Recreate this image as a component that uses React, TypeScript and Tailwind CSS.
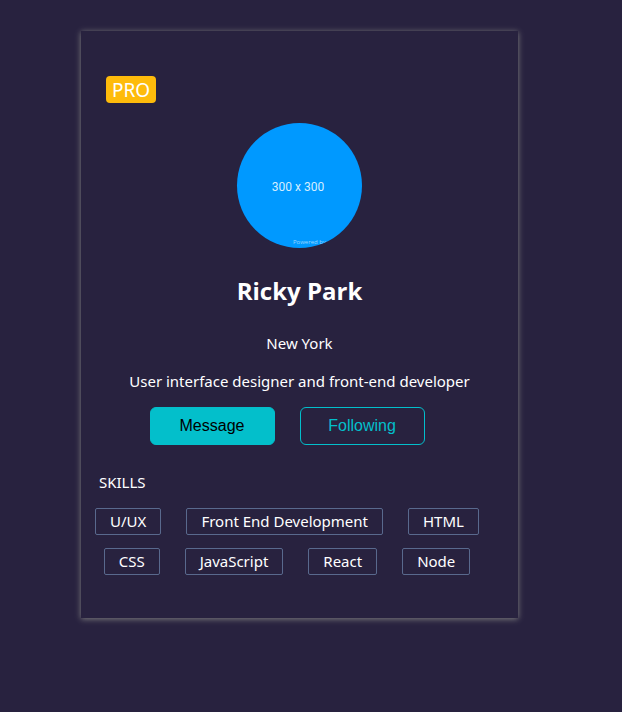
import React from "react";

const skillRows = [
  ["U/UX", "Front End Development", "HTML"],
  ["CSS", "JavaScript", "React", "Node"],
];

function Avatar() {
  return (
    <svg
      role="img"
      aria-label="Ricky Park"
      viewBox="0 0 125 125"
      className="mx-auto mt-5 block size-[125px] rounded-full bg-[#0099ff]"
    >
      <text
        x="61"
        y="68"
        textAnchor="middle"
        fontSize="12"
        fill="#d5eeff"
        className="font-['Roboto',sans-serif]"
      >
        300 x 300
      </text>
      <text x="56" y="121" fontSize="6" fill="#99d6ff" className="font-['Open_Sans',sans-serif]">
        Powered by
      </text>
    </svg>
  );
}

function SkillRow({ skills }: { skills: string[] }) {
  return (
    <ul className="flex justify-center">
      {skills.map((skill) => (
        <li
          key={skill}
          className="mr-[25px] h-[27px] rounded-xs border border-[#59698d] px-[14px] leading-[25px] whitespace-nowrap"
        >
          {skill}
        </li>
      ))}
    </ul>
  );
}

export default function App() {
  return (
    <div className="min-h-screen bg-[#28223f] pt-[31px] pr-[104px] pb-10 pl-[81px] font-['Noto_Sans','Segoe_UI',sans-serif] text-[15px] leading-6 text-white">
      <main className="pt-[45px] pb-[43px] shadow-[0_1px_6px_0_#808080]">
        <span className="ml-[25px] block h-[27px] w-[50px] rounded-sm bg-[#febb0b] text-center text-[19px] leading-[29px]">
          PRO
        </span>
        <Avatar />
        <h1 className="mt-[25px] text-center font-['Open_Sans','Segoe_UI',sans-serif] text-2xl leading-9 font-bold">
          Ricky Park
        </h1>
        <p className="mt-[22px] text-center">New York</p>
        <p className="mt-[14px] text-center">User interface designer and front-end developer</p>
        <div className="mt-[14px] flex justify-center font-['Liberation_Sans',Arial,sans-serif] text-base">
          <button
            type="button"
            className="mr-[25px] h-[38px] w-[125px] rounded-md border border-[#03bfcb] bg-[#03bfcb] text-black"
          >
            Message
          </button>
          <button
            type="button"
            className="mr-[25px] h-[38px] w-[125px] rounded-md border border-[#03bfcb] text-[#03bfcb]"
          >
            Following
          </button>
        </div>
        <h2 className="mt-[25px] ml-[18px]">SKILLS</h2>
        <div className="mt-[14px] flex flex-col gap-[13px]">
          {skillRows.map((skills) => (
            <SkillRow key={skills[0]} skills={skills} />
          ))}
        </div>
      </main>
    </div>
  );
}
